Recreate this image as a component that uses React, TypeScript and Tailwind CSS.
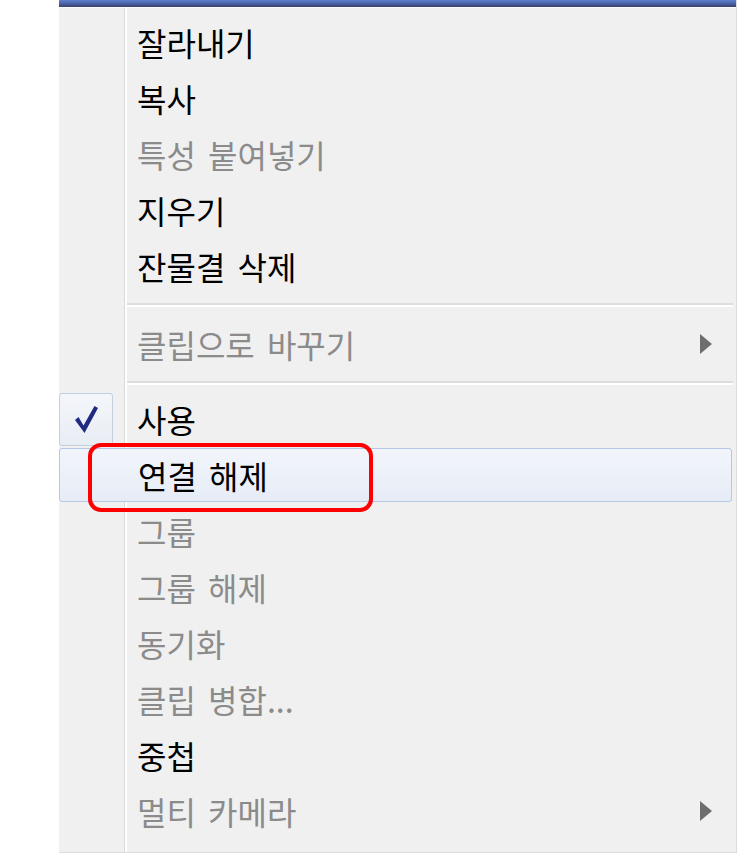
import React from "react";

type Row =
  | { kind: "sep"; h: string }
  | {
      kind: "item";
      label: string;
      disabled?: boolean;
      sub?: boolean;
      checked?: boolean;
      hover?: boolean;
    };

const rows: Row[] = [
  { kind: "item", label: "잘라내기" },
  { kind: "item", label: "복사" },
  { kind: "item", label: "특성 붙여넣기", disabled: true },
  { kind: "item", label: "지우기" },
  { kind: "item", label: "잔물결 삭제" },
  { kind: "sep", h: "h-[22px]" },
  { kind: "item", label: "클립으로 바꾸기", disabled: true, sub: true },
  { kind: "sep", h: "h-[19px]" },
  { kind: "item", label: "사용", checked: true },
  { kind: "item", label: "연결 해제", hover: true },
  { kind: "item", label: "그룹", disabled: true },
  { kind: "item", label: "그룹 해제", disabled: true },
  { kind: "item", label: "동기화", disabled: true },
  { kind: "item", label: "클립 병합...", disabled: true },
  { kind: "item", label: "중첩" },
  { kind: "item", label: "멀티 카메라", disabled: true, sub: true },
];

function Check() {
  return (
    <svg width="23" height="27" viewBox="0 0 23 27">
      <polygon points="0,14 3.5,11 8.5,19.5 19.5,0 23,2 9.5,27" fill="#1f2a80" />
    </svg>
  );
}

function SubArrow() {
  return (
    <svg width="12" height="20" viewBox="0 0 12 20">
      <polygon points="0,0 12,10 0,20" fill="#6e6e6e" />
    </svg>
  );
}

export default function App() {
  return (
    <div className="flex h-[858px] w-[738px] bg-white pl-[59px] font-['Noto_Sans_CJK_KR',sans-serif]">
      <div className="flex h-[853px] w-[678px] flex-col border-r border-b border-[#dcdcdc] bg-[#f0f0f0]">
        {/* window edge above the menu */}
        <div className="h-[7px] bg-[linear-gradient(to_bottom,#5f80d0,#4a62a6,#37416e)]" />
        <div className="h-[1px] bg-[#fbfbfb]" />

        <div className="flex flex-1 flex-col bg-[linear-gradient(to_right,transparent_65px,#d9d9d9_65px,#d9d9d9_66px,#ffffff_66px,#ffffff_68px,transparent_68px)] pt-[6px] pb-[12px]">
          {rows.map((row, i) => {
            if (row.kind === "sep") {
              return (
                <div key={i} className={`${row.h} pt-[9px] pl-[68px] pr-[3px]`}>
                  <div className="h-[2px] bg-[#dddddd]" />
                  <div className="h-[2px] bg-white" />
                </div>
              );
            }
            return (
              <div
                key={i}
                className={`relative flex items-center ${
                  row.hover
                    ? "my-[1px] mr-[4px] h-[54px] rounded-[3px] border border-[#b4c8e6] bg-[linear-gradient(to_bottom,#f2f5fb,#e6ecf6)]"
                    : "h-[56px]"
                }`}
              >
                <div className="flex h-full w-[66px] shrink-0 items-center">
                  {row.checked && (
                    <div className="flex h-[53px] w-[54px] items-center justify-center rounded-[3px] border border-[#c3cfdf] bg-[linear-gradient(to_bottom,#f4f6fa,#e8edf4)]">
                      <Check />
                    </div>
                  )}
                </div>
                <span
                  className={`pl-[12px] text-[32px] leading-none font-normal [word-spacing:5px] ${
                    row.disabled ? "text-[#8b8b8b]" : "text-black"
                  }`}
                >
                  {row.label}
                </span>
                {row.sub && (
                  <div className="ml-auto mr-[24px] flex items-center">
                    <SubArrow />
                  </div>
                )}
                {row.hover && (
                  <div className="absolute top-[-6px] left-[28px] h-[69px] w-[285px] rounded-[13px] border-[4px] border-[#ff0000]" />
                )}
              </div>
            );
          })}
        </div>
      </div>
    </div>
  );
}
